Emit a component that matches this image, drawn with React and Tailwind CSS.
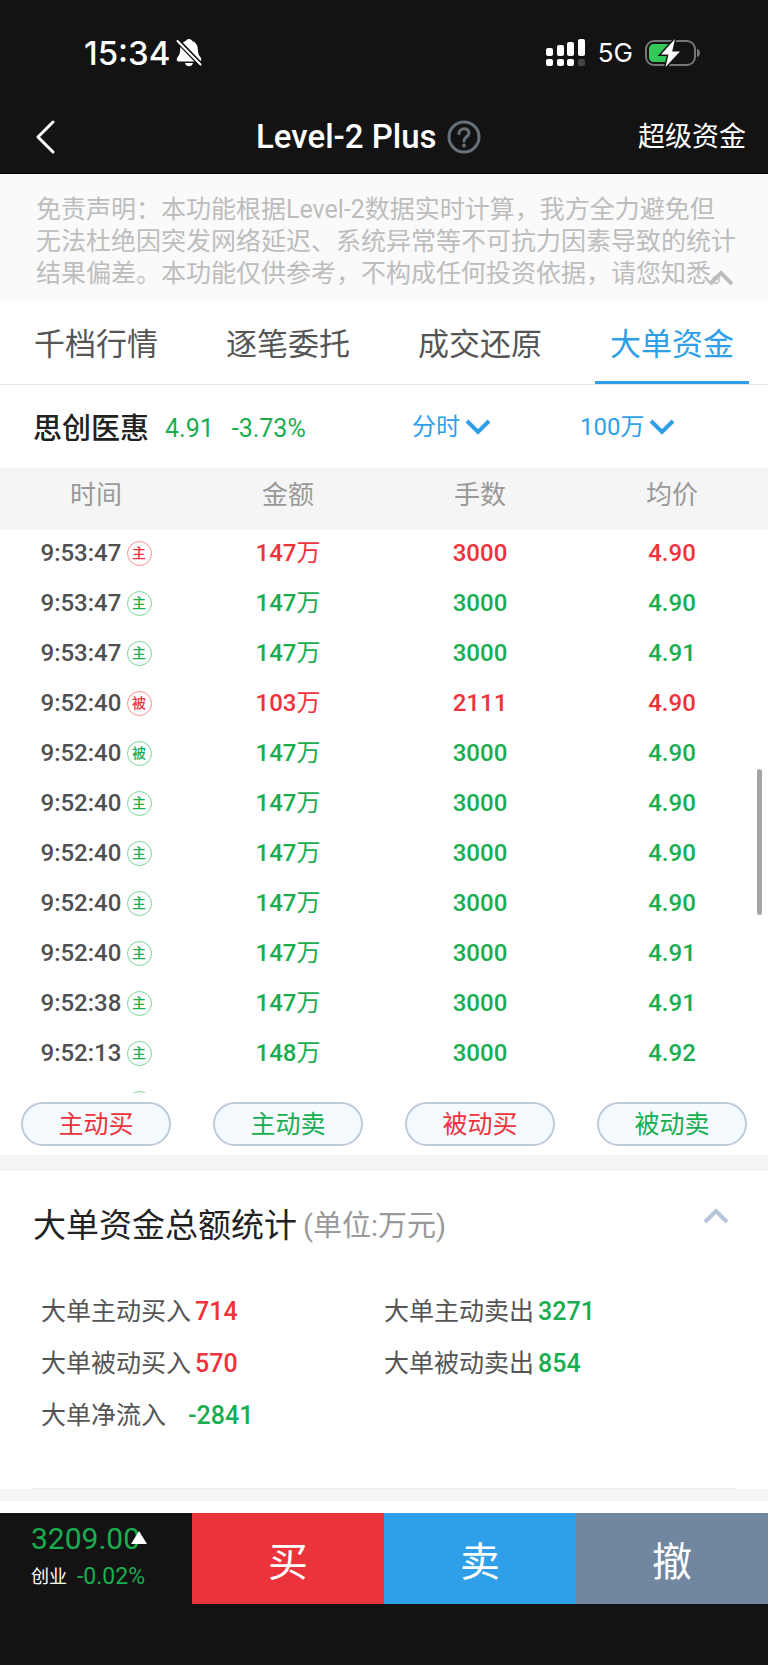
import { useState } from 'react'

const TABS = ['千档行情', '逐笔委托', '成交还原', '大单资金']

const DISCLAIMER = [
  '免责声明：本功能根据Level-2数据实时计算，我方全力避免但',
  '无法杜绝因突发网络延迟、系统异常等不可抗力因素导致的统计',
  '结果偏差。本功能仅供参考，不构成任何投资依据，请您知悉。',
]

const ORDERS = [
  { time: '9:53:47', kind: '主', side: 'buy', amount: 147, lots: 3000, price: '4.90' },
  { time: '9:53:47', kind: '主', side: 'sell', amount: 147, lots: 3000, price: '4.90' },
  { time: '9:53:47', kind: '主', side: 'sell', amount: 147, lots: 3000, price: '4.91' },
  { time: '9:52:40', kind: '被', side: 'buy', amount: 103, lots: 2111, price: '4.90' },
  { time: '9:52:40', kind: '被', side: 'sell', amount: 147, lots: 3000, price: '4.90' },
  { time: '9:52:40', kind: '主', side: 'sell', amount: 147, lots: 3000, price: '4.90' },
  { time: '9:52:40', kind: '主', side: 'sell', amount: 147, lots: 3000, price: '4.90' },
  { time: '9:52:40', kind: '主', side: 'sell', amount: 147, lots: 3000, price: '4.90' },
  { time: '9:52:40', kind: '主', side: 'sell', amount: 147, lots: 3000, price: '4.91' },
  { time: '9:52:38', kind: '主', side: 'sell', amount: 147, lots: 3000, price: '4.91' },
  { time: '9:52:13', kind: '主', side: 'sell', amount: 148, lots: 3000, price: '4.92' },
  { side: 'sell' },
]

const FILTERS = [
  { label: '主动买', side: 'buy' },
  { label: '主动卖', side: 'sell' },
  { label: '被动买', side: 'buy' },
  { label: '被动卖', side: 'sell' },
]

const TOTALS = [
  { label: '大单主动买入', value: '714', side: 'buy' },
  { label: '大单主动卖出', value: '3271', side: 'sell' },
  { label: '大单被动买入', value: '570', side: 'buy' },
  { label: '大单被动卖出', value: '854', side: 'sell' },
  { label: '大单净流入', value: '-2841', side: 'sell', wide: true },
]

const TEXT = { buy: 'text-[#ef323b]', sell: 'text-[#18ae4f]' }
const BADGE = {
  buy: 'border-[#f78f94] text-[#ef323b]',
  sell: 'border-[#7fd29c] text-[#18ae4f]',
}

function Chevron({ up = false, className = '' }) {
  return (
    <svg viewBox="0 0 26 16" className={`h-4 w-[26px] ${className}`} fill="none" stroke="currentColor" strokeWidth="4" aria-hidden="true">
      <path d={up ? 'M2 14 13 3l11 11' : 'M2 2l11 11L24 2'} />
    </svg>
  )
}

function StatusBar() {
  return (
    <div className="flex h-[100px] items-center pt-[6px] pr-[67px] pl-[84px] font-['Inter',sans-serif]">
      <span className="text-[33px] leading-10 font-medium">15:34</span>
      <svg viewBox="0 0 26 28" className="ml-[6px] h-7 w-[26px]" aria-hidden="true">
        <path fill="#fff" d="M13 0c-1.800 0-3 1-3.400 2C6 3.400 4.300 6.500 4.200 10c-.1 4-.7 6-2.700 8.300C.2 20 .5 22.500 2.500 22.500h21c2 0 2.300-2.500 1-4.200-2-2.300-2.600-4.300-2.700-8.300-.1-3.500-1.800-6.600-5.400-8C16 1 14.800 0 13 0zM9 24h8c-.4 2-2 3.300-4 3.300S9.400 26 9 24z" />
        <path stroke="#131313" strokeWidth="5" d="M0 0l26 27" />
        <path stroke="#fff" strokeWidth="2" strokeLinecap="round" d="M1.500 2l23 23.500" />
      </svg>
      <svg viewBox="0 0 40 28" className="ml-auto h-7 w-10" fill="#fff" aria-hidden="true">
        <rect x="0" y="9" width="7" height="8" rx="2" />
        <rect x="11" y="6" width="7" height="11" rx="2" />
        <rect x="21" y="3" width="7" height="14" rx="2" />
        <rect x="32" y="0" width="7" height="17" rx="2" />
        <rect x="0" y="20" width="7" height="7" rx="2" />
        <rect x="11" y="20" width="7" height="7" rx="2" />
        <rect x="21" y="20" width="7" height="7" rx="2" />
        <rect x="32" y="20" width="7" height="7" rx="2" fill="#444" />
      </svg>
      <span className="ml-3 text-[26px] leading-8">5G</span>
      <svg viewBox="0 0 56 28" className="ml-3 h-7 w-14" aria-hidden="true">
        <rect x="1" y="2" width="49" height="24" rx="8" fill="none" stroke="#77777a" strokeWidth="2" />
        <path d="M52 10c4 1 4 7 0 8z" fill="#77777a" />
        <path d="M9 5h14v18H9c-3 0-5-2-5-5v-8c0-3 2-5 5-5z" fill="#34c759" />
        <path d="M30 0 16 15.500h7.500L20.500 28l14.500-15.500h-7.800z" fill="#fff" stroke="#131313" strokeWidth="3" paintOrder="stroke" />
      </svg>
    </div>
  )
}

function OrderRow({ order }) {
  const color = TEXT[order.side]
  return (
    <tr className="h-[50px] text-center text-[24px] leading-8 font-medium">
      <td className="pb-1">
        <span className="flex items-center justify-center gap-[6px] text-[#505050]">
          <span className="h-8 w-20">{order.time}</span>
          <span className={`flex size-[25px] items-center justify-center rounded-full border text-[14px] leading-none ${BADGE[order.side]}`}>
            {order.kind}
          </span>
        </span>
      </td>
      <td className={`pb-1 ${color}`}>
        {order.amount}
        {order.amount && <span className="font-normal">万</span>}
      </td>
      <td className={`pb-1 ${color}`}>{order.lots}</td>
      <td className={`pb-1 ${color}`}>{order.price}</td>
    </tr>
  )
}

export default function App() {
  const [tab, setTab] = useState('大单资金')

  return (
    <div className="min-h-screen bg-white font-['Roboto','Noto_Sans_CJK_SC',sans-serif] text-[#555]">
      <header className="border-b border-black bg-[#131313] text-white">
        <StatusBar />
        <div className="flex h-[73px] items-center">
          <div className="w-1/3 pl-[35px]">
            <button type="button" aria-label="返回" className="block">
              <svg viewBox="0 0 20 34" className="h-[34px] w-5" fill="none" stroke="#fff" strokeWidth="3" strokeLinecap="round" strokeLinejoin="round">
                <path d="M18 2 3 17l15 15" />
              </svg>
            </button>
          </div>
          <h1 className="text-[33px] leading-10 font-medium">Level-2 Plus</h1>
          <button type="button" aria-label="帮助" className="ml-[10px]">
            <svg viewBox="0 0 34 34" className="size-[34px]" fill="none" stroke="#66707a" strokeWidth="3">
              <circle cx="17" cy="17" r="15" />
              <path d="M12 13.500c0-6 10-6.200 10-.5 0 3.800-5 3.800-5 8" strokeLinecap="round" />
              <circle cx="17" cy="25.500" r="2" fill="#66707a" stroke="none" />
            </svg>
          </button>
          <a href="#super" className="ml-auto pr-[22px] text-[27px] leading-10">超级资金</a>
        </div>
      </header>

      <section className="relative bg-[#fafafa] pt-5 pb-[13px] pl-[36px] text-[25px] leading-8 whitespace-nowrap text-[#bdbdbd]">
        {DISCLAIMER.map((line) => (
          <p key={line}>{line}</p>
        ))}
        <button type="button" aria-label="收起" className="absolute right-[34px] bottom-[17px]">
          <Chevron up className="block" />
        </button>
      </section>

      <nav className="grid grid-cols-4 border-b border-[#e6e6e6]">
        {TABS.map((name) => (
          <button
            key={name}
            type="button"
            onClick={() => setTab(name)}
            className={`mx-[19px] h-[81px] border-b-[3px] pt-[6px] text-[31px] leading-10 whitespace-nowrap ${
              name === tab ? 'border-[#2f9fea] text-[#2f9fea]' : 'border-transparent'
            }`}
          >
            <span className="-mx-4">{name}</span>
          </button>
        ))}
      </nav>

      <div className="flex h-[83px] items-center pt-1 text-[25px] leading-8">
        <h2 className="pl-[33px] text-[29px] font-medium text-[#222]">思创医惠</h2>
        <span className="ml-4 text-[#18ae4f]">4.91</span>
        <span className="ml-[18px] text-[#18ae4f]">-3.73%</span>
        <div className="ml-auto flex w-[356px] pb-1 text-[24px] text-[#2f9fea]">
          <button type="button" className="flex w-[168px] items-center gap-[5px]">
            分时
            <Chevron />
          </button>
          <button type="button" className="flex items-center gap-[5px]">
            100万
            <Chevron />
          </button>
        </div>
      </div>

      <div className="relative h-[625px] overflow-hidden">
        <table className="w-full table-fixed">
          <thead>
            <tr className="h-[62px] bg-[#f5f5f5] text-[26px] leading-8 text-[#999]">
              <th className="pb-2 font-normal">时间</th>
              <th className="pb-2 font-normal">金额</th>
              <th className="pb-2 font-normal">手数</th>
              <th className="pb-2 font-normal">均价</th>
            </tr>
          </thead>
          <tbody>
            {ORDERS.map((order, i) => (
              <OrderRow key={i} order={order} />
            ))}
          </tbody>
        </table>
        <div className="absolute top-[301px] right-[6px] h-[146px] w-[5px] rounded-full bg-[#a5a5a5]" />
      </div>

      <div className="grid grid-cols-4 pt-[9px] pb-[9px]">
        {FILTERS.map((f) => (
          <button
            key={f.label}
            type="button"
            className={`mx-[21px] h-11 rounded-full border-2 border-[#bccbdb] bg-[#f5faff] pt-[2px] text-[25px] leading-8 ${TEXT[f.side]}`}
          >
            {f.label}
          </button>
        ))}
      </div>

      <section className="border-t-[16px] border-[#f5f5f5]">
        <div className="flex h-[108px] items-center pt-[2px] pr-[39px] pl-[33px]">
          <h2 className="text-[33px] leading-10 text-[#222]">大单资金总额统计</h2>
          <span className="ml-[6px] text-[29px] leading-10 text-[#999]">(单位:万元)</span>
          <button type="button" aria-label="收起" className="ml-auto pb-5 text-[#b7c6d6]">
            <Chevron up className="block" />
          </button>
        </div>
        <dl className="grid grid-cols-2 pt-[7px] pb-[46px] text-[25px] leading-[52px]">
          {TOTALS.map((t, i) => (
            <div key={t.label} className={`flex ${t.wide ? 'gap-[22px]' : 'gap-1'} ${i % 2 === 0 ? 'pl-[41px]' : ''}`}>
              <dt>{t.label}</dt>
              <dd className={`font-medium ${TEXT[t.side]}`}>{t.value}</dd>
            </div>
          ))}
        </dl>
      </section>
      <div className="mx-8 h-px bg-[#ececec]" />
      <div className="mb-3 h-3 bg-[#f5f5f5]" />

      <footer className="grid min-h-[152px] grid-cols-4 items-start bg-[#131313] text-white">
        <div className="pt-[6px] pl-[31px] text-[#18ae4f]">
          <div className="relative w-fit text-[30px] leading-10">
            3209.00
            <svg viewBox="0 0 16 13" className="absolute right-[-7px] bottom-[15px] h-[13px] w-4" fill="#fff" aria-hidden="true">
              <path d="M8 0l8 13H0z" />
            </svg>
          </div>
          <div className="flex items-center gap-[10px] text-[23px] leading-9">
            <span className="text-[18px] text-white">创业</span>
            -0.02%
          </div>
        </div>
        <button type="button" className="h-[91px] bg-[#eb333b] pt-2 text-[40px]">买</button>
        <button type="button" className="h-[91px] bg-[#2f9fea] pt-2 text-[40px]">卖</button>
        <button type="button" className="h-[91px] bg-[#70879f] pt-2 text-[40px]">撤</button>
      </footer>
    </div>
  )
}
